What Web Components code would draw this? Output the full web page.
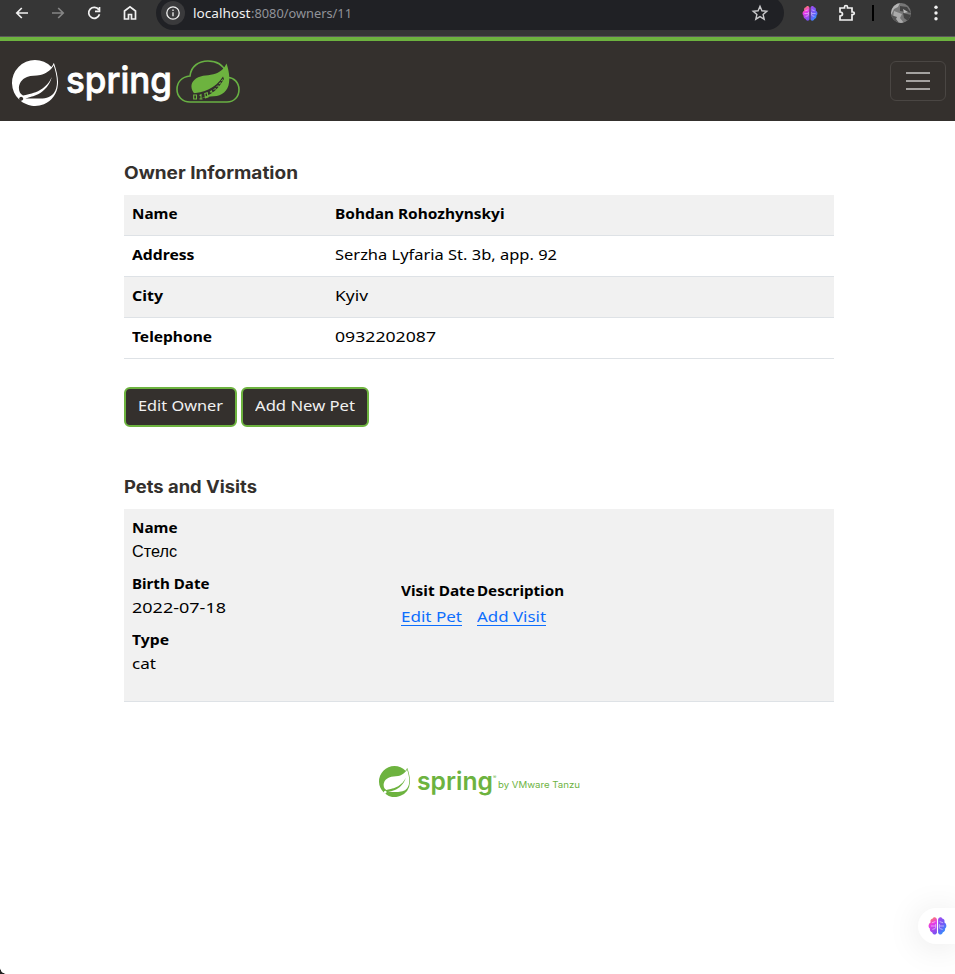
<!DOCTYPE html>
<html lang="en">
<head>
<meta charset="utf-8">
<title>PetClinic - Owner Information</title>
<style>
html,body{margin:0;height:974px;overflow:hidden;background:#fff;color:#000;font:15px/24px "Noto Sans","Liberation Sans",sans-serif}
</style>
</head>
<body>
<pet-clinic></pet-clinic>
<script>
const define = (name, html, setup) => customElements.define(name, class extends HTMLElement {
  connectedCallback() {
    if (this.shadowRoot) return;
    const t = document.createElement('template');
    t.innerHTML = html;
    this.attachShadow({mode: 'open'}).append(t.content.cloneNode(true));
    if (setup) setup(this, this.shadowRoot);
  }
});

// One-line label whose letters are widened or narrowed to span the width given in "w".
define('fit-text', `<style>:host{display:inline-block;white-space:nowrap;vertical-align:top}span{display:inline-block;white-space:pre;transform-origin:0 0}</style><span></span>`, (el, root) => {
  const s = root.querySelector('span');
  s.textContent = el.getAttribute('text');
  const w = +el.getAttribute('w');
  s.style.transform = `scaleX(${w / s.getBoundingClientRect().width})`;
  el.style.width = w + 'px';
});

define('spring-mark', `<style>:host{display:block}svg{display:block;width:100%;height:100%}</style>
<svg viewBox="0 0 24 24"><path fill="currentColor" d="M21.8537 1.4158a10.4504 10.4504 0 0 1-1.284 2.2471A11.9666 11.9666 0 1 0 3.8518 20.7757l.4445.3951a11.9543 11.9543 0 0 0 19.6316-8.2971c.3457-3.0126-.568-6.8649-2.0742-11.458zM5.5805 20.8745a1.0174 1.0174 0 1 1-.1482-1.4323 1.0396 1.0396 0 0 1 .1482 1.4323zm16.1991-3.5806c-2.9385 3.9263-9.2601 2.5928-13.2852 2.7904 0 0-.7161.0494-1.4323.1481 0 0 .2717-.1234.6174-.2469 2.8398-.9877 4.1732-1.1853 5.9018-2.0743 3.2349-1.6545 6.4698-5.2844 7.1118-9.0379-1.2347 3.6053-4.9881 6.7167-8.3959 7.9761-2.3459.8643-6.5685 1.7039-6.5685 1.7039l-.1729-.0988c-2.8645-1.4076-2.9632-7.6304 2.2718-9.6306 2.2966-.889 4.4696-.395 6.9637-.9877 2.6422-.6174 5.7043-2.5929 6.939-5.1609 1.3828 4.1732 3.062 10.643.0493 14.6434z"/></svg>`);

define('brain-icon', `<style>:host{display:block}svg{display:block;width:100%;height:100%}</style>
<svg viewBox="0 0 20 20"><defs><linearGradient id="l" x1=".3" y1="0" x2=".6" y2="1"><stop offset="0" stop-color="#ff8a50"/><stop offset=".4" stop-color="#e83ae8"/><stop offset="1" stop-color="#7a50f0"/></linearGradient><linearGradient id="r" x1=".2" y1="0" x2=".8" y2="1"><stop offset="0" stop-color="#a04cf0"/><stop offset=".5" stop-color="#6c5cf6"/><stop offset="1" stop-color="#1ea5ff"/></linearGradient></defs>
<path fill="url(#l)" d="M9.4 3.2C8.600 0 5.700.3 5 2.200 3 2.400 2.200 4 2.700 6.200.200 7.700 0 11 2 12.700c-.3 2 .6 3.500 2.500 4.200.8 2.700 4 2.900 4.900.3z"/>
<path fill="url(#r)" d="M10.600 3.200C11.400 0 14.300.3 15 2.200c2 .2 2.800 1.800 2.300 4 2.500 1.500 2.700 4.800.7 6.500.3 2-.6 3.500-2.500 4.200-.8 2.700-4 2.900-4.900.3z"/>
<path fill="none" stroke="#fff" stroke-opacity=".6" stroke-width=".9" stroke-linecap="round" d="M4.500 6.500 7.300 5.500M3.500 10H7M8 8.500v3M5 13.500l2.500-.8M15.500 6.500 12.700 5.500M16.500 10H13M12 8.500v3M15 13.500l-2.500-.8"/></svg>`);

define('browser-bar', `<style>
:host{display:flex;background:#363636;border-bottom:1px solid #5b585a;box-sizing:border-box;height:37px;color:#f1f1f1;overflow:hidden}
svg{display:block;fill:none;stroke:currentColor;stroke-width:1.7;flex:none}
.nav{display:flex;gap:16px;padding:3px 0 0 12px;width:156px;box-sizing:border-box}
.nav svg{width:20px;height:20px}
.address{width:628px;height:34px;margin-top:-4px;background:#202125;border-radius:17px;display:flex;align-items:center;box-sizing:border-box;padding:0 14px 0 5px}
.info{width:24px;height:24px;border-radius:50%;background:#3a3a3c;display:grid;place-items:center;margin-right:8px}
.url{font:13px/20px "Noto Sans",sans-serif;display:flex;flex:1}
.dim{color:#919399}
.tools{display:flex;align-items:center;height:26px;flex:1;margin-left:6px}
.line{width:2px;height:16px;background:#000;margin:0 17px 0 16px}
</style>
<div class="nav">
<svg viewBox="0 0 20 20"><path d="M16 10H5M9.800 5 4.800 10l5 5"/></svg>
<svg viewBox="0 0 20 20" color="#858585"><path d="M4 10h11M10.200 5l5 5-5 5"/></svg>
<svg viewBox="0 0 20 20"><path d="M14.800 6.800A5.500 5.500 0 1 0 15.500 11.300M15.500 4v4.400H11"/></svg>
<svg viewBox="0 0 20 20"><path d="M4.500 16V8L10 3.900 15.500 8v8h-4v-4.500h-3V16z"/></svg>
</div>
<div class="address"><div class="info"><svg width="16" height="16" viewBox="0 0 16 16" style="stroke-width:1.3"><circle cx="8" cy="8" r="6.200"/><path d="M8 7.200v4M8 4.500v1.500"/></svg></div>
<div class="url"><fit-text text="localhost" w="57.500"></fit-text><fit-text class="dim" text=":8080/owners/11" w="101"></fit-text></div>
<svg width="20" height="20" viewBox="0 0 20 20" style="color:#c9c9cb;stroke-width:1.4"><path d="m10 3.300 1.900 4.500 4.900.4-3.700 3.200 1.100 4.800-4.200-2.600-4.200 2.600 1.100-4.800-3.700-3.200 4.900-.4z"/></svg></div>
<div class="tools"><brain-icon style="width:16px;height:17px;margin:0 20px 0 12px"></brain-icon>
<svg width="18" height="18" viewBox="0 0 18 18"><path d="M2 4h4.500V3q0-1.500 1.500-1.500T9.500 3v1H14v4h1q1.300 0 1.300 1.300T15 10.600h-1V16H2v-4q2.500-.2 2.500-2T2 8z"/></svg>
<div class="line"></div>
<svg width="20" height="20" viewBox="0 0 20 20"><defs><clipPath id="c"><circle cx="10" cy="10" r="10"/></clipPath></defs><g clip-path="url(#c)" stroke="none"><path fill="#777" d="M0 0h20v20H0z"/><path fill="#b5b5b5" d="M0 0h9L7 4l-4 2-3 6z"/><path fill="#444" d="m9 3 7 1 4 6-4-1-7-1zM12 10l8 2-3 6-4-3z"/><path fill="#aaa" d="m3 8 8 3-2 4 4 5H7l-5-5z"/><path fill="#555" d="m0 12 6 2-1 2 3 4H0z"/><path fill="#bbb" d="m12 6 5 3-4 1z"/></g></svg>
<svg width="4" height="16" viewBox="0 0 4 16" style="margin-left:23px"><g fill="currentColor" stroke="none"><circle cx="2" cy="2.200" r="1.700"/><circle cx="2" cy="8" r="1.700"/><circle cx="2" cy="13.800" r="1.700"/></g></svg></div>`);

define('cloud-leaf', `<style>:host{display:block;width:64px;height:44px}svg{display:block}</style>
<svg width="64" height="44" viewBox="0 0 64 44"><path fill="none" stroke="#68b043" stroke-width="1.600" d="M14 42C6 42 1 36 1 29.500 1 22 6 17 14 16 15 6 23 1 32 1c9 0 15 4 18 11 .8 2 1.200 3.500 1.200 5.500C58 17 63 23 63 29.500 63 37 58 42 51 42z"/>
<path fill="#6db33f" d="M50.500 3.500c2 6 4 14 2 22-2.500 8-9 11-18 11l-12 2-5-6C14 27 15 22 20 18.500c6-4 13-2.500 20-5 5-2 8-5 10.500-10z"/>
<path fill="#34302d" d="M15 33.500c13-.5 24-5 32-17l1 2.500C41 32 31 38.500 15 40z"/>
<g fill="none" stroke="#6db33f" stroke-width="1.100"><path d="M17.700 35h2.800v4h-2.800zM23.500 35.500l1.500-.8v4.300M23.500 39h3M28.800 33.500l2.500-.7.700 4.200-2.500.7zM34 32.300l1.300-1.300 2 4"/><path stroke-width=".9" d="m37.500 29.500 2-1 1.800 3.200M40.500 27l1.500-1.500 2 3M43 24l1.300-1.500 1.700 2.500M45.200 21l1.300-1.500 1 2"/></g></svg>`);

define('clinic-header', `<style>
:host{display:flex;align-items:center;justify-content:space-between;box-sizing:border-box;height:84px;border-top:4px solid #6db33f;background:#34302d;padding:0 9px 0 12px;color:#fff}
.brand{display:flex;align-items:center;height:80px}
.word{font:500 37px/46px Inter,sans-serif;-webkit-text-stroke:.8px #fff;paint-order:stroke;stroke-linejoin:round;margin:-2px 4px 0 8px}
.menu{width:56px;height:40px;box-sizing:border-box;border:1px solid #4a4643;border-radius:6px;display:flex;flex-direction:column;align-items:center;justify-content:center;gap:6px}
.menu i{width:24px;height:2px;background:#a4a2a0}
</style><div class="brand"><spring-mark style="width:46px;height:46px;margin-top:4px"></spring-mark><div class="word"><fit-text text="spring" w="106"></fit-text></div><cloud-leaf style="margin-top:2px"></cloud-leaf></div><div class="menu"><i></i><i></i><i></i></div>`);

define('section-title', `<style>:host{display:block;font:700 17px/24px Inter,sans-serif;color:#34302d}</style><slot></slot>`);

define('info-row', `<style>:host{display:flex;height:41px;box-sizing:border-box;border-bottom:1px solid #dee2e6;padding:6px 8px}:host([shade]){background:#f1f1f1}.k{width:203px}.k,:host([strong]){font-weight:700}</style><div class="k"><slot name="key"></slot></div><slot></slot>`);

define('clinic-button', `<style>:host{display:block;box-sizing:border-box;height:40px;border:2px solid #6db33f;border-radius:6px;background:#34302d;color:#f1f1f1;padding:4px 12px 8px}</style><slot></slot>`);

define('pet-card', `<style>
:host{display:flex;box-sizing:border-box;height:193px;background:#f1f1f1;border-bottom:1px solid #dee2e6;padding:6px 8px}
dl{margin:0;width:269px}dt,b{font-weight:700}dd{margin:0 0 8px}
.visits{display:grid;grid-template-columns:75.500px auto;grid-template-rows:26px 24px;align-content:start;padding-top:63px}
a{color:#0d6efd;height:21px;border-bottom:1px solid #0d6efd;justify-self:start}
dd.cyr{font:16px/26px "Liberation Sans",sans-serif;height:24px}
</style><dl><dt><fit-text text="Name" w="45.500"></fit-text></dt><dd class="cyr"><fit-text text="Стелс" w="45"></fit-text></dd><dt><fit-text text="Birth Date" w="77.500"></fit-text></dt><dd><fit-text text="2022-07-18" w="94"></fit-text></dd><dt><fit-text text="Type" w="37"></fit-text></dt><dd><fit-text text="cat" w="24"></fit-text></dd></dl>
<div class="visits"><b><fit-text text="Visit Date" w="74"></fit-text></b><b><fit-text text="Description" w="87"></fit-text></b><a><fit-text text="Edit Pet" w="61"></fit-text></a><a><fit-text text="Add Visit" w="69"></fit-text></a></div>`);

define('clinic-footer', `<style>
:host{display:flex;color:#6db33f;margin:64px 0 0 255px;height:34px}
.w{font:600 25px/30px Inter,sans-serif;margin-left:7px}
.r{font:5px/8px Inter,sans-serif;padding-top:7px;width:5px}
.by{font:9px/14px Inter,sans-serif;margin-top:12px}
</style><spring-mark style="width:31px;height:31px"></spring-mark><div class="w"><fit-text text="spring" w="76"></fit-text></div><span class="r">®</span><div class="by"><fit-text text="by VMware Tanzu" w="82"></fit-text></div>`);

define('chat-tab', `<style>:host{position:absolute;right:0;top:908px;width:37px;height:36px;box-sizing:border-box;background:#fff;border-radius:18px 0 0 18px;box-shadow:0 3px 34px rgba(0,0,0,.1);padding:8px 0 0 10px}brain-icon{width:19px;height:20px}</style><brain-icon></brain-icon>`);

define('pet-clinic', `<style>
:host{display:block;position:relative;height:974px;overflow:hidden;background:#fff}
main{width:710px;margin-left:124px;padding-top:40px}
.actions{display:flex;gap:4px;margin:28px 0 48px}
.corner{position:absolute;left:0;bottom:0;width:6px;height:6px;background:radial-gradient(circle at 100% 0,transparent 5.500px,#222 6px)}
section-title{margin-bottom:10px}
</style><browser-bar></browser-bar><clinic-header></clinic-header>
<main><section-title><fit-text text="Owner Information" w="174"></fit-text></section-title>
<info-row shade strong><fit-text slot="key" text="Name" w="45.500"></fit-text><fit-text text="Bohdan Rohozhynskyi" w="169.500"></fit-text></info-row>
<info-row><fit-text slot="key" text="Address" w="62.500"></fit-text><fit-text text="Serzha Lyfaria St. 3b, app. 92" w="222"></fit-text></info-row>
<info-row shade><fit-text slot="key" text="City" w="31"></fit-text><fit-text text="Kyiv" w="33"></fit-text></info-row>
<info-row><fit-text slot="key" text="Telephone" w="80"></fit-text><fit-text text="0932202087" w="101"></fit-text></info-row>
<div class="actions"><clinic-button><fit-text text="Edit Owner" w="85"></fit-text></clinic-button><clinic-button><fit-text text="Add New Pet" w="100"></fit-text></clinic-button></div>
<section-title><fit-text text="Pets and Visits" w="133"></fit-text></section-title><pet-card></pet-card><clinic-footer></clinic-footer></main>
<chat-tab></chat-tab><div class="corner"></div>`);
</script>
</body>
</html>
